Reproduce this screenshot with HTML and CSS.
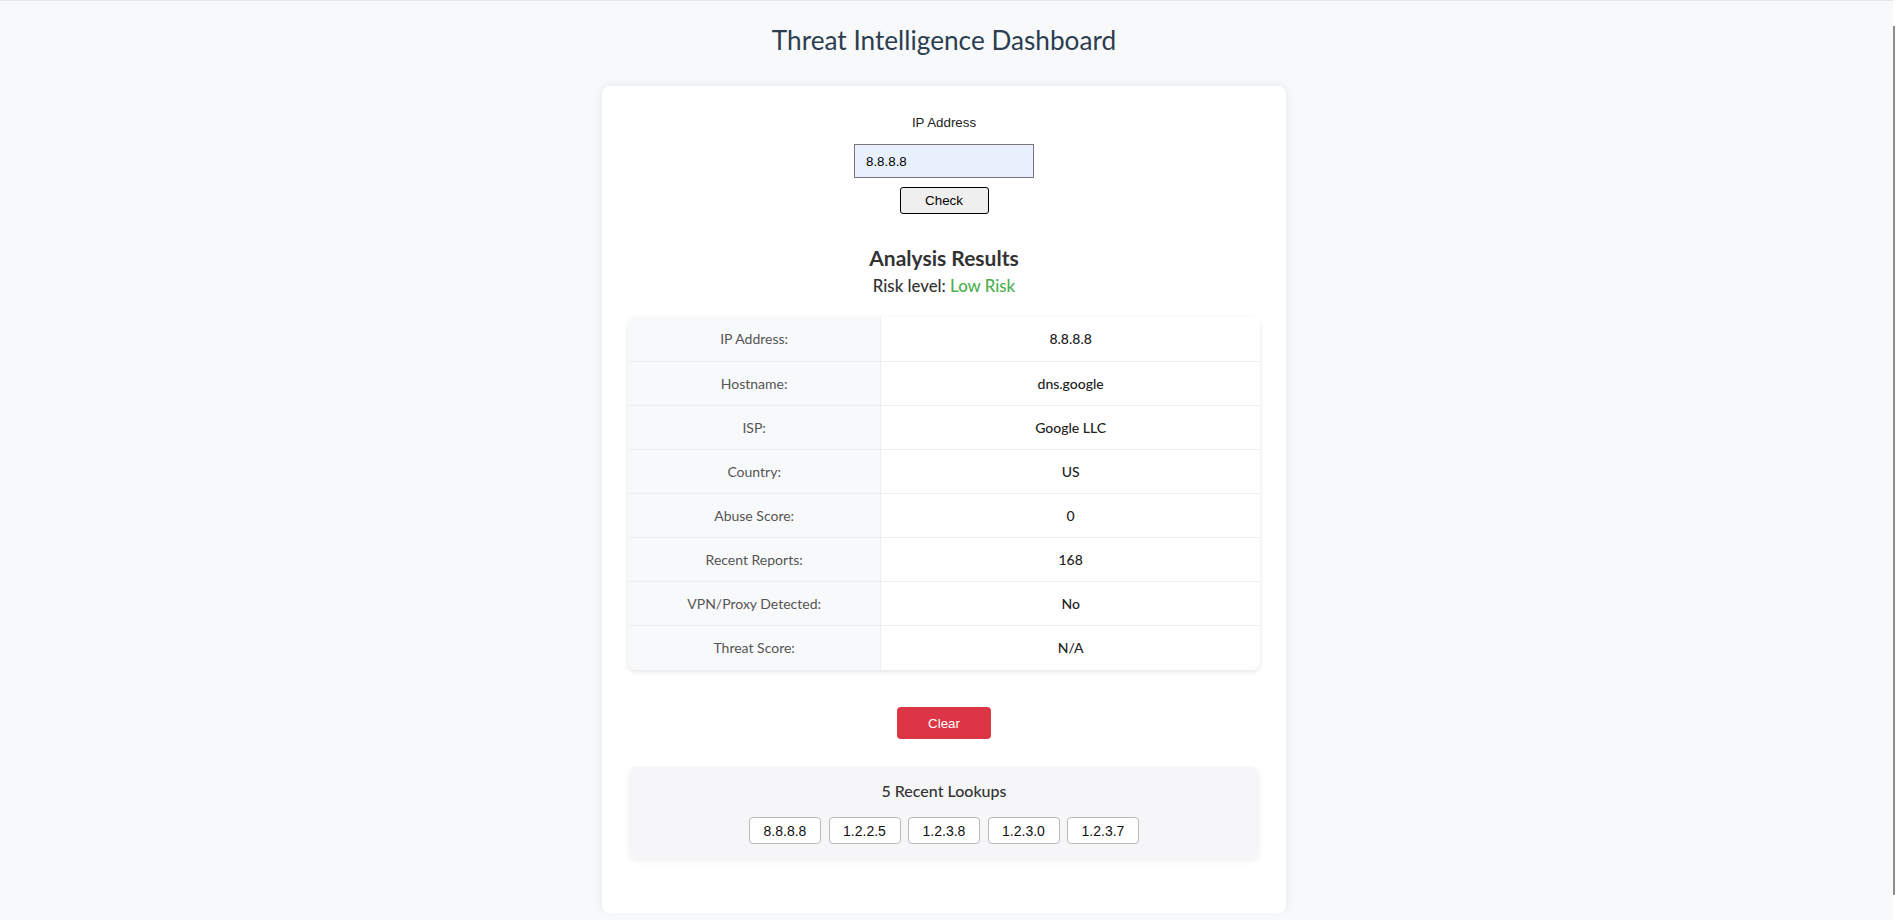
FILE: index.html
```html
<!DOCTYPE html>
<html lang="en">
<head>
<meta charset="utf-8">
<title>Threat Intelligence Dashboard</title>
<link rel="stylesheet" href="styles.css">
</head>
<body>
<div class="page">
  <h1 class="title">Threat Intelligence Dashboard</h1>
  <div class="card">
    <form class="lookup-form">
      <label class="field-label" for="ip">IP Address</label>
      <input class="ip-input" id="ip" type="text" value="8.8.8.8">
      <button class="check-btn" type="button">Check</button>
    </form>

    <h3 class="results-title">Analysis Results</h3>
    <p class="risk">Risk level: <span class="risk-low">Low Risk</span></p>

    <table class="results-table">
      <tbody>
        <tr><td class="label">IP Address:</td><td class="value">8.8.8.8</td></tr>
        <tr><td class="label">Hostname:</td><td class="value">dns.google</td></tr>
        <tr><td class="label">ISP:</td><td class="value">Google LLC</td></tr>
        <tr><td class="label">Country:</td><td class="value">US</td></tr>
        <tr><td class="label">Abuse Score:</td><td class="value">0</td></tr>
        <tr><td class="label">Recent Reports:</td><td class="value">168</td></tr>
        <tr><td class="label">VPN/Proxy Detected:</td><td class="value">No</td></tr>
        <tr><td class="label">Threat Score:</td><td class="value">N/A</td></tr>
      </tbody>
    </table>

    <div class="clear-row">
      <button class="clear-btn" type="button">Clear</button>
    </div>

    <div class="recent">
      <h4 class="recent-title">5 Recent Lookups</h4>
      <div class="chips">
        <button class="chip" type="button">8.8.8.8</button>
        <button class="chip" type="button">1.2.2.5</button>
        <button class="chip" type="button">1.2.3.8</button>
        <button class="chip" type="button">1.2.3.0</button>
        <button class="chip" type="button">1.2.3.7</button>
      </div>
    </div>
  </div>
</div>
<div class="scrollbar"><div class="scroll-thumb"></div></div>
</body>
</html>
```

FILE: styles.css
```css
html {
  overflow: hidden;
}

body {
  margin: 0;
  padding: 0 8px 0 0;
  background: #f8f9fa;
  border-top: 1px solid #e4e6e9;
  font-family: Lato, "Open Sans", sans-serif;
  color: #333;
}

.page {
  display: flex;
  flex-direction: column;
  align-items: center;
}

.title {
  margin: 23px 0 30px;
  font-size: 26.2px;
  line-height: 32px;
  font-weight: 400;
  color: #2c3e50;
}

.card {
  width: 684px;
  box-sizing: border-box;
  padding: 29px 26px 26px;
  background: #fff;
  border-radius: 8px;
  box-shadow: 0 0 10px rgba(0, 0, 0, 0.08);
  display: flex;
  flex-direction: column;
  align-items: center;
}

.lookup-form {
  display: flex;
  flex-direction: column;
  align-items: center;
  margin: 0;
}

.field-label {
  font-family: "Liberation Sans", Arial, sans-serif;
  font-size: 13.33px;
  line-height: 16px;
  color: #222;
}

.ip-input {
  margin-top: 13px;
  width: 180px;
  height: 34px;
  box-sizing: border-box;
  padding: 0 11px;
  border: 1px solid #767676;
  border-radius: 0;
  background: #e8f0fe;
  font-family: "Liberation Sans", Arial, sans-serif;
  font-size: 13.33px;
  color: #000;
}

.check-btn {
  margin-top: 9px;
  width: 89px;
  height: 27px;
  box-sizing: border-box;
  border: 1px solid #000;
  border-radius: 3px;
  background: #efefef;
  font-family: "Liberation Sans", Arial, sans-serif;
  font-size: 13.33px;
  color: #000;
  padding: 0;
}

.results-title {
  margin: 32px 0 0;
  font-size: 21px;
  line-height: 24px;
  font-weight: 700;
  color: #333;
}

.risk {
  margin: 6px 0 0;
  font-size: 16.8px;
  line-height: 20px;
  font-weight: 500;
  color: #333;
}

.risk-low {
  color: #4caf50;
}

.results-table {
  margin-top: 21px;
  width: 100%;
  border-collapse: collapse;
  border-radius: 8px;
  overflow: hidden;
  box-shadow: 0 2px 5px rgba(0, 0, 0, 0.1);
}

.results-table td {
  height: 44px;
  box-sizing: border-box;
  padding: 0 12px;
  text-align: center;
  font-size: 14px;
  border-bottom: 1px solid #eeeeee;
}

.results-table tr:last-child td {
  border-bottom: none;
  height: 45px;
}

.results-table .label {
  width: 40%;
  background: #f8f9fa;
  color: #555;
  border-right: 1px solid #eeeeee;
}

.results-table .value {
  background: #fff;
  color: #222;
  font-weight: 500;
}

.clear-row {
  margin-top: 37px;
  display: flex;
  justify-content: center;
}

.clear-btn {
  width: 94px;
  height: 32px;
  border: none;
  border-radius: 4px;
  background: #dc3545;
  color: #fff;
  font-family: "Liberation Sans", Arial, sans-serif;
  font-size: 13.33px;
  padding: 0;
}

.recent {
  margin: 28px 0 28px;
  width: 630px;
  box-sizing: border-box;
  padding: 14px 0 15px;
  background: #f6f6f8;
  border-radius: 8px;
  box-shadow: 0 2px 6px rgba(0, 0, 0, 0.06);
  display: flex;
  flex-direction: column;
  align-items: center;
}

.recent-title {
  margin: 0;
  font-size: 16px;
  line-height: 20px;
  font-weight: 500;
  color: #333;
}

.chips {
  margin-top: 16px;
  display: flex;
  gap: 7.5px;
}

.chip {
  width: 72px;
  height: 27px;
  box-sizing: border-box;
  padding: 0;
  border: 1px solid #b9b9b9;
  border-radius: 4px;
  background: #fff;
  font-family: "Liberation Sans", Arial, sans-serif;
  font-size: 14px;
  color: #111;
}

.scrollbar {
  position: fixed;
  top: 0;
  right: 0;
  bottom: 0;
  width: 3px;
  background: #fff;
}

.scroll-thumb {
  position: absolute;
  top: 26px;
  bottom: 25px;
  left: 0;
  width: 2px;
  background: #8c8c8c;
}
```
